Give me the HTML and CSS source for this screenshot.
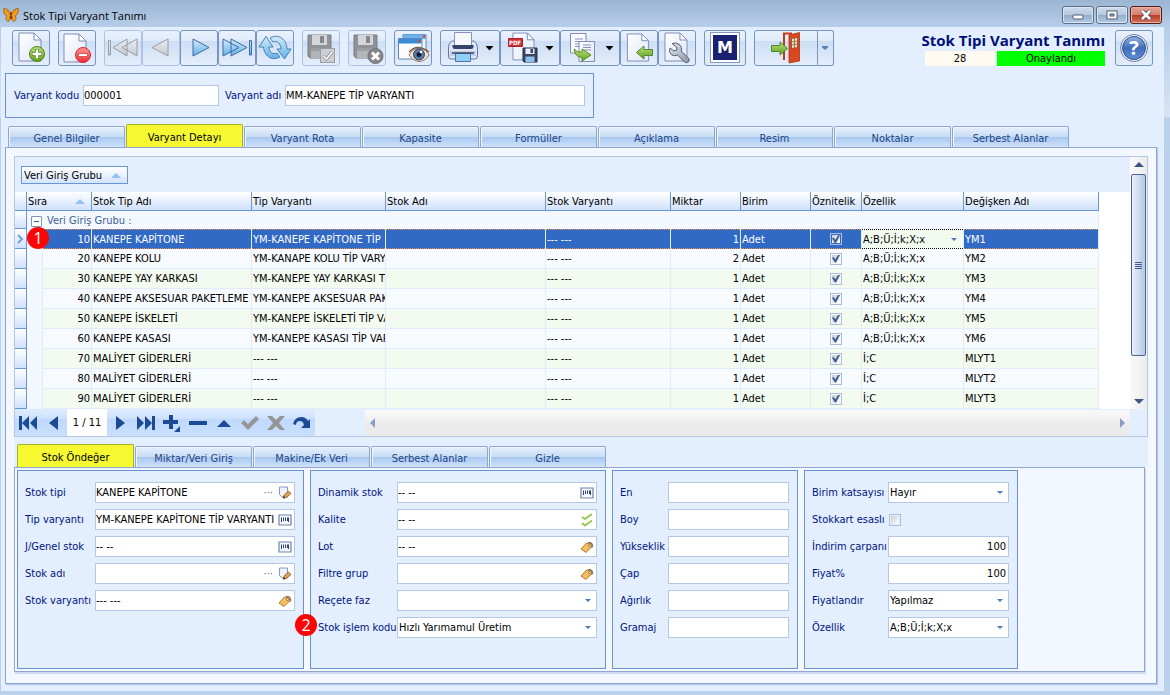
FILE: index.html
```html
<!DOCTYPE html>
<html lang="tr">
<head>
  <meta charset="utf-8">
  <title>Stok Tipi Varyant Tanımı</title>
  <link rel="stylesheet" href="styles.css">
</head>
<body>
  <!-- shared gradients and symbols -->
  <svg class="defs" width="0" height="0" aria-hidden="true">
    <defs>
      <linearGradient id="gPage" x1="0" y1="0" x2="1" y2="1"><stop offset="0" stop-color="#fff"/><stop offset="1" stop-color="#dfe6f6"/></linearGradient>
      <linearGradient id="gBlue" x1="0" y1="0" x2="0" y2="1"><stop offset="0" stop-color="#d4ecfa"/><stop offset="1" stop-color="#5fb0e8"/></linearGradient>
      <linearGradient id="gGray" x1="0" y1="0" x2="0" y2="1"><stop offset="0" stop-color="#eceef2"/><stop offset="1" stop-color="#c3c7ce"/></linearGradient>
      <linearGradient id="gGreen" x1="0" y1="0" x2="0" y2="1"><stop offset="0" stop-color="#b9e07c"/><stop offset="1" stop-color="#5fa01c"/></linearGradient>
      <linearGradient id="gRed" x1="0" y1="0" x2="0" y2="1"><stop offset="0" stop-color="#ff9a9a"/><stop offset="1" stop-color="#ee2c35"/></linearGradient>
      <linearGradient id="gHelp" x1="0" y1="0" x2="0" y2="1"><stop offset="0" stop-color="#8fb4e6"/><stop offset=".5" stop-color="#3f6cb8"/><stop offset="1" stop-color="#5f8fd4"/></linearGradient>
      <linearGradient id="gSteel" x1="0" y1="0" x2="1" y2="1"><stop offset="0" stop-color="#e3e7ee"/><stop offset="1" stop-color="#8c96a8"/></linearGradient>
      <symbol id="page" viewBox="0 0 24 30"><path d="M1 1H16L23 8V29H1Z" fill="url(#gPage)" stroke="#7f8db8"/><path d="M16 1V8H23Z" fill="#fff" stroke="#7f8db8"/></symbol>
      <symbol id="floppyGray" viewBox="0 0 25 25"><path d="M1 1H24V24H3L1 22Z" fill="#8f9297" stroke="#7b7e84"/><path d="M5 1H20V11H5Z" fill="#d4d6da"/><path d="M13 2H17V9H13Z" fill="#85888d"/><path d="M4 14H21V24H4Z" fill="#b2b5ba"/><path d="M4 14H21V17H4Z" fill="#9b9ea3"/></symbol>
      <symbol id="lookup" viewBox="0 0 14 12"><path d="M1 1H13V11H1Z" fill="#f4f7fd" stroke="#6f83ad" stroke-width="1.200"/><path d="M3.500 3.500V8M5.500 3.500V7M7.500 3.500V7M9.500 3.500V7M10.500 3.500V8" stroke="#2e4570"/></symbol>
      <symbol id="edit" viewBox="0 0 14 14"><path d="M1.500 1H9.500V11H4L1.500 8.500Z" fill="#eef3fc" stroke="#8598c8"/><path d="M5 12L6 9L10.500 5L13 7.500L8.500 11.500Z" fill="#dba15a" stroke="#8c5a28" stroke-width=".8"/><path d="M5 12.500L6 10L7.500 11.800Z" fill="#333"/></symbol>
      <symbol id="tag" viewBox="0 0 14 14"><path d="M1 9L6.500 3L12 3.500L11.500 7L6 12.500Z" fill="#f7bd5d" stroke="#a8702a" stroke-width=".9"/><circle cx="9.500" cy="5.500" r="1" fill="#fff" stroke="#704a1c" stroke-width=".7"/><path d="M8 3Q11 1 12 4Q14 7 11.500 8" fill="none" stroke="#555" stroke-width=".9"/></symbol>
      <symbol id="ticks" viewBox="0 0 14 16"><path d="M2 5L5 7L12 2M2 11L5 13.500L12 8.500" fill="none" stroke="#9ac94f" stroke-width="2"/></symbol>
    </defs>
  </svg>

  <div class="window">
    <header class="titlebar">
      <svg width="16" height="16" viewBox="0 0 16 16"><path d="M8 7C6.500 3 3.500 1.500 .7 1.500C.5 4 1 8 4 9C2 10 3 13.500 5 14.500C7 14 8 11 8 9C8 11 9 14 11 14.500C13 13.500 14 10 12 9C15 8 15.500 4 15.300 1.500C12.500 1.500 9.500 3 8 7Z" fill="#f79f1f" stroke="#8a4d10" stroke-width=".7"/><path d="M8 5.500V12" stroke="#3f2006" stroke-width="1.300"/><path d="M3.500 3.500L7.500 8.500L5.500 12M12.500 3.500L8.500 8.500L10.500 12" fill="none" stroke="#b5610f" stroke-width=".6"/></svg>
      <span class="titlebar-text">Stok Tipi Varyant Tanımı</span>
      <div class="winbtns">
        <button class="winbtn" aria-label="Küçült"><svg width="12" height="12"><rect x="1" y="6" width="10" height="4" rx="1" fill="#fff" stroke="#4d5c70"/></svg></button>
        <button class="winbtn" aria-label="Büyüt"><svg width="12" height="12"><rect x="1" y="2" width="10" height="8" fill="#fff" stroke="#4d5c70"/><rect x="4" y="5" width="4" height="2" fill="#8ea5c0" stroke="#4d5c70"/></svg></button>
        <button class="winbtn close" aria-label="Kapat"><svg width="12" height="12"><path d="M2 2L10 10M10 2L2 10" stroke="#54525e" stroke-width="4.500"/><path d="M2 2L10 10M10 2L2 10" stroke="#fff" stroke-width="2.500"/></svg></button>
      </div>
    </header>

    <main class="client">
      <div class="toolbar">
        <div class="tgroup">
          <button class="tbtn" title="Yeni"><svg width="36" height="34"><use href="#page" x="5" y="1" width="24" height="30"/><circle cx="24" cy="23" r="7.500" fill="url(#gGreen)" stroke="#4c8217"/><path d="M24 18V28M19 23H29" stroke="#4c8217" stroke-width="4"/><path d="M24 18.500V27.500M19.500 23H28.500" stroke="#fff" stroke-width="2.500"/></svg></button>
        </div>
        <div class="tgroup">
          <button class="tbtn" title="Sil"><svg width="36" height="34"><use href="#page" x="4" y="2" width="24" height="30"/><circle cx="24" cy="24" r="7.500" fill="url(#gRed)" stroke="#d8222c"/><rect x="19.500" y="22.500" width="9" height="3" fill="#fff" stroke="#c0202a" stroke-width=".6"/></svg></button>
        </div>
        <div class="tgroup">
          <button class="tbtn" disabled title="İlk"><svg width="36" height="34" fill="url(#gGray)" stroke="#989da7"><path d="M3.500 9.500H5.500V24H3.500ZM8 16.500L22 8V25ZM17 16.500L32 8V25Z"/></svg></button>
          <button class="tbtn" disabled title="Önceki"><svg width="36" height="34" fill="url(#gGray)" stroke="#989da7"><path d="M9 16.500L25 8V25Z"/></svg></button>
          <button class="tbtn" title="Sonraki"><svg width="36" height="34" fill="url(#gBlue)" stroke="#3d6ba3"><path d="M28 16.500L12 8V25Z"/></svg></button>
          <button class="tbtn" title="Son"><svg width="36" height="34" fill="url(#gBlue)" stroke="#3d6ba3"><path d="M20 16.500L4 8V25ZM28 16.500L12 8V25ZM30.500 9.500H32.500V24H30.500Z"/></svg></button>
          <button class="tbtn" title="Yenile"><svg width="36" height="34"><path d="M13 7C22 2 30 9 30 18H34L27.500 28L20 18H24C24 13 20 9 16 11Z" fill="url(#gBlue)" stroke="#4a80b4"/><path d="M23 26C14 31 7 24 6.500 16H2L9 5.500L16 16H12C12 21 16 24 20 22Z" fill="url(#gBlue)" stroke="#4a80b4"/></svg></button>
        </div>
        <div class="tgroup">
          <button class="tbtn" disabled title="Kaydet"><svg width="36" height="34"><use href="#floppyGray" x="4" y="3" width="25" height="25"/><rect x="17.500" y="17.500" width="14" height="14" fill="#ccced2" stroke="#9a9da2"/><path d="M20.500 25L23.500 28L29 21" fill="none" stroke="#83868c" stroke-width="3"/><path d="M20.500 25L23.500 28L29 21" fill="none" stroke="#fff" stroke-width="1.500"/></svg></button>
        </div>
        <div class="tgroup">
          <button class="tbtn" disabled title="Vazgeç"><svg width="36" height="34"><use href="#floppyGray" x="4" y="3" width="25" height="25"/><circle cx="26.500" cy="25" r="7.500" fill="#85878b" stroke="#6f7176"/><path d="M23 21.500L30 28.500M30 21.500L23 28.500" stroke="#fff" stroke-width="3"/></svg></button>
        </div>
        <div class="tgroup">
          <button class="tbtn" title="Görünüm"><svg width="36" height="34"><path d="M8 3.500H31V20H8Z" fill="#f2f6fd" stroke="#5d86bd"/><path d="M8 3.500H31V8H8Z" fill="#6db2e8"/><path d="M3.500 7.500H27V28H3.500Z" fill="#fafcff" stroke="#5d86bd"/><path d="M4 8H26.500V12.500H4Z" fill="#3b8ad4"/><circle cx="29" cy="5.500" r="1.200" fill="#e03a2a"/><circle cx="24.500" cy="10" r="1.200" fill="#e03a2a"/><path d="M14 24Q18 17 25 17Q31 18 34 24Q30 31 23 30.500Q18 30 14 24Z" fill="#f3e3d4" stroke="#9c7a63"/><path d="M14 21Q22 12 34 21" fill="none" stroke="#7b5a4c" stroke-width="1.300"/><circle cx="24" cy="23.500" r="5.500" fill="#587ba8" stroke="#2f4668"/><circle cx="24" cy="23.500" r="2.500" fill="#131c2c"/><circle cx="26" cy="21" r="1.300" fill="#fff"/></svg></button>
        </div>
        <div class="tgroup">
          <button class="tbtn wide" title="Yazdır"><svg width="58" height="34"><path d="M9 12Q7.500 13 7.500 17V25Q7.500 28 10 28H34Q36.500 28 36.500 25V17Q36.500 12 33 10H11Z" fill="#dfe5f3" stroke="#6577a5"/><path d="M13.500 1.500H30.500V15H13.500Z" fill="#f5f8ff" stroke="#8494c0"/><path d="M11.500 14H32.500V16Q32.500 18 30 18H14Q11.500 18 11.500 16Z" fill="#34436b"/><path d="M9 20H35V25H9Z" fill="#c4cde2"/><path d="M14.500 22.500H29.500V30.500H14.500Z" fill="#8fd0f7" stroke="#4d75ad"/><path d="M11 22H33" stroke="#34436b" stroke-width="1.500"/><path d="M44.500 15H52.500L48.500 19.500Z"/></svg></button>
          <button class="tbtn wide" title="PDF"><svg width="58" height="34"><use href="#page" x="11" y="1" width="23" height="29"/><path d="M7.500 7.500H21.500V15.500H7.500Z" fill="#cf3038" stroke="#a81f27"/><text class="pdf" x="14" y="14" text-anchor="middle">PDF</text><path d="M22 17H36V31H23L22 30Z" fill="#3a4566" stroke="#252e48"/><path d="M24.500 17.500H33.500V23H24.500Z" fill="#e8edf6"/><path d="M29.500 18H32V22H29.500Z" fill="#3a4566"/><path d="M24.500 25.500H33.500V31H24.500Z" fill="#8fc0ea"/><path d="M44.500 15H52.500L48.500 19.500Z"/></svg></button>
          <button class="tbtn wide" title="Kopyala"><svg width="58" height="34"><path d="M9.500 2.500H25V22H9.500Z" fill="#f8faff" stroke="#7f8db8"/><path d="M14 8H22M14 10.500H22M14 13H22M14 15.500H20" stroke="#8593b5"/><path d="M18 10.500H33.500V30.500H18Z" fill="url(#gPage)" stroke="#7f8db8"/><path d="M22 14H30M22 16.500H30M22 19H30" stroke="#8593b5"/><path d="M13 18Q16 22 21 21V18L30 24L21 30V26.500Q14 26 13 18Z" fill="url(#gGreen)" stroke="#568d1c"/><path d="M44.500 15H52.500L48.500 19.500Z"/></svg></button>
          <button class="tbtn" title="Al"><svg width="36" height="34"><use href="#page" x="5" y="2" width="24" height="29"/><path d="M15.500 21.500L23 15V18.500H31.500V24.500H23V28Z" fill="url(#gGreen)" stroke="#4c8a2c"/></svg></button>
          <button class="tbtn" title="Ayarlar"><svg width="36" height="34"><use href="#page" x="5" y="1" width="24" height="30"/><path d="M13 12.500L17.500 16L18 19L15 20L11 17Q9.500 22 13 24Q16 25.500 18.500 24L25.500 31Q27.500 32.500 29.500 31Q31 29 29.500 27L22.500 20.500Q23.500 16 20.500 13.500Q17 11 13 12.500Z" fill="url(#gSteel)" stroke="#566174"/></svg></button>
        </div>
        <div class="tgroup">
          <button class="tbtn mid" title="M"><svg width="40" height="34"><rect x="5.500" y="1.500" width="29" height="30" fill="#fff" stroke="#8a97bd"/><rect x="8" y="4" width="24" height="25" fill="#1a2170"/><text class="logo" x="20" y="22" text-anchor="middle">M</text></svg></button>
        </div>
        <div class="tgroup">
          <button class="tbtn exit" title="Çıkış"><svg width="62" height="34"><path d="M29 29V2.500H37" fill="none" stroke="#c23a18" stroke-width="2"/><path d="M34 4L44.500 1.500V30L34 32Z" fill="#d9481f" stroke="#ad3411" stroke-width=".8"/><path d="M36.500 7.500L42.500 6.500V16.500L36.500 17.500Z" fill="#f1e3c8" stroke="#8d3a1d" stroke-width=".7"/><path d="M39.500 7V17M36.500 11L42.500 10M36.500 14L42.500 13" stroke="#8d6a4d" stroke-width=".9"/><path d="M32.500 17.500L25 11V14.500H16.500V20.500H25V24Z" fill="url(#gGreen)" stroke="#4c8a2c"/></svg></button>
          <button class="tbtn drop" title="Çıkış seçenekleri"><svg width="14" height="34"><path d="M4 15H10V16.500L7 19L4 16.500Z" fill="#5a82b8"/></svg></button>
        </div>
        <div class="doc">
          <h1>Stok Tipi Varyant Tanımı</h1>
          <div class="doc-state"><span class="doc-no">28</span><span class="doc-ok">Onaylandı</span></div>
        </div>
        <button class="tbtn" title="Yardım"><svg width="36" height="34"><circle cx="18" cy="17" r="13.500" fill="#f3f6fc" stroke="#6c7fa8"/><circle cx="18" cy="17" r="11.500" fill="url(#gHelp)" stroke="#2e5194"/><text class="qmark" x="18" y="24" text-anchor="middle">?</text></svg></button>
      </div>

      <section class="keybox">
        <label for="vkod">Varyant kodu</label><input class="box code" id="vkod" value="000001">
        <label for="vadi">Varyant adı</label><input class="box name" id="vadi" value="MM-KANEPE TİP VARYANTI">
      </section>

      <nav class="tabs">
        <button class="tab">Genel Bilgiler</button>
        <button class="tab active">Varyant Detayı</button>
        <button class="tab">Varyant Rota</button>
        <button class="tab">Kapasite</button>
        <button class="tab">Formüller</button>
        <button class="tab">Açıklama</button>
        <button class="tab">Resim</button>
        <button class="tab">Noktalar</button>
        <button class="tab">Serbest Alanlar</button>
      </nav>

      <section class="sheet">
        <div class="grid">
          <div class="grid-body">
            <div class="grid-view">
              <div class="groupbar"><button class="chip">Veri Giriş Grubu <i class="sort"></i></button></div>
              <div class="table-wrap">
                <table>
                  <colgroup><col class="c-ind"><col class="c-pad"><col class="c-sira"><col class="c-160"><col class="c-134"><col class="c-160"><col class="c-125"><col class="c-70"><col class="c-70"><col class="c-51"><col class="c-102"><col class="c-135"></colgroup>
                  <thead>
                    <tr><th></th><th colspan="2"><span class="sira">Sıra <i class="sort"></i></span></th><th>Stok Tip Adı</th><th>Tip Varyantı</th><th>Stok Adı</th><th>Stok Varyantı</th><th>Miktar</th><th>Birim</th><th>Öznitelik</th><th>Özellik</th><th>Değişken Adı</th></tr>
                  </thead>
                  <tbody>
                    <tr class="grp"><td class="ind"></td><td colspan="11"><button class="fold" aria-label="Daralt"></button>Veri Giriş Grubu :</td></tr>
                    <tr class="sel"><td class="ind"><svg width="8" height="10"><path d="M2 1L6 5L2 9" fill="none" stroke="#6f9fdc" stroke-width="2"/></svg></td><td class="pad"><span class="mark mark-row">1</span></td><td class="num">10</td><td>KANEPE KAPİTONE</td><td>YM-KANEPE KAPİTONE TİP</td><td></td><td>--- ---</td><td class="num">1</td><td>Adet</td><td class="chk"><input type="checkbox" checked aria-label="Öznitelik"></td><td class="cell-edit"><div class="pick"><select aria-label="Özellik"><option>A;B;Ü;İ;k;X;x</option></select></div></td><td>YM1</td></tr>
                    <tr><td class="ind"></td><td class="pad"></td><td class="num">20</td><td>KANEPE KOLU</td><td>YM-KANAPE KOLU TİP VARYANTI</td><td></td><td>--- ---</td><td class="num">2</td><td>Adet</td><td class="chk"><input type="checkbox" checked aria-label="Öznitelik"></td><td>A;B;Ü;İ;k;X;x</td><td>YM2</td></tr>
                    <tr><td class="ind"></td><td class="pad"></td><td class="num">30</td><td>KANEPE YAY KARKASI</td><td>YM-KANEPE YAY KARKASI TİP VARYANTI</td><td></td><td>--- ---</td><td class="num">1</td><td>Adet</td><td class="chk"><input type="checkbox" checked aria-label="Öznitelik"></td><td>A;B;Ü;İ;k;X;x</td><td>YM3</td></tr>
                    <tr><td class="ind"></td><td class="pad"></td><td class="num">40</td><td>KANEPE AKSESUAR PAKETLEME</td><td>YM-KANEPE AKSESUAR PAKETLEME</td><td></td><td>--- ---</td><td class="num">1</td><td>Adet</td><td class="chk"><input type="checkbox" checked aria-label="Öznitelik"></td><td>A;B;Ü;İ;k;X;x</td><td>YM4</td></tr>
                    <tr><td class="ind"></td><td class="pad"></td><td class="num">50</td><td>KANEPE İSKELETİ</td><td>YM-KANEPE İSKELETİ TİP VARYANTI</td><td></td><td>--- ---</td><td class="num">1</td><td>Adet</td><td class="chk"><input type="checkbox" checked aria-label="Öznitelik"></td><td>A;B;Ü;İ;k;X;x</td><td>YM5</td></tr>
                    <tr><td class="ind"></td><td class="pad"></td><td class="num">60</td><td>KANEPE KASASI</td><td>YM-KANEPE KASASI TİP VARYANTI</td><td></td><td>--- ---</td><td class="num">1</td><td>Adet</td><td class="chk"><input type="checkbox" checked aria-label="Öznitelik"></td><td>A;B;Ü;İ;k;X;x</td><td>YM6</td></tr>
                    <tr><td class="ind"></td><td class="pad"></td><td class="num">70</td><td>MALİYET GİDERLERİ</td><td>--- ---</td><td></td><td>--- ---</td><td class="num">1</td><td>Adet</td><td class="chk"><input type="checkbox" checked aria-label="Öznitelik"></td><td>İ;C</td><td>MLYT1</td></tr>
                    <tr><td class="ind"></td><td class="pad"></td><td class="num">80</td><td>MALİYET GİDERLERİ</td><td>--- ---</td><td></td><td>--- ---</td><td class="num">1</td><td>Adet</td><td class="chk"><input type="checkbox" checked aria-label="Öznitelik"></td><td>İ;C</td><td>MLYT2</td></tr>
                    <tr><td class="ind"></td><td class="pad"></td><td class="num">90</td><td>MALİYET GİDERLERİ</td><td>--- ---</td><td></td><td>--- ---</td><td class="num">1</td><td>Adet</td><td class="chk"><input type="checkbox" checked aria-label="Öznitelik"></td><td>İ;C</td><td>MLYT3</td></tr>
                  </tbody>
                </table>
              </div>
            </div>
            <div class="vscroll">
              <i class="arr-up"></i>
              <div class="thumb"><i></i><i></i><i></i><i></i></div>
              <i class="arr-down"></i>
            </div>
          </div>
          <div class="grid-foot">
            <div class="navigator">
              <button aria-label="İlk"><svg width="20" height="16"><path d="M1 1H4V15H1ZM11 1V15L4 8ZM19 1V15L12 8Z"/></svg></button>
              <button aria-label="Önceki"><svg width="20" height="16"><path d="M14 1V15L5 8Z"/></svg></button>
              <span class="pos">1 / 11</span>
              <button aria-label="Sonraki"><svg width="20" height="16"><path d="M6 1V15L15 8Z"/></svg></button>
              <button aria-label="Son"><svg width="20" height="16"><path d="M1 1V15L8 8ZM9 1V15L16 8ZM16 1H19V15H16Z"/></svg></button>
              <button aria-label="Ekle"><svg width="20" height="18"><path d="M7 1H11V6H16V10H11V15H7V10H1V6H7ZM18 12V18H12Z"/></svg></button>
              <button aria-label="Çıkar"><svg width="20" height="16"><path d="M1 6H19V10H1Z"/></svg></button>
              <button aria-label="Yukarı"><svg width="20" height="16"><path d="M3 12L10 5L17 12Z"/></svg></button>
              <button aria-label="Onayla" disabled><svg width="20" height="16"><path d="M1 8L4 5L8 9L16 1L19 4L8 15Z"/></svg></button>
              <button aria-label="İptal" disabled><svg width="20" height="16"><path d="M1 1H6L10 5L14 1H19L13 8L19 15H14L10 11L6 15H1L7 8Z"/></svg></button>
              <button aria-label="Yinele"><svg width="20" height="16"><path d="M1 9Q3 2 9 2Q14 2 16 6L18 4V13H9L12 10Q11 6 8 6Q4 6 4 10Z"/></svg></button>
            </div>
            <div class="hscroll"><i class="arr-left"></i><i class="arr-right"></i></div>
            <div class="corner"></div>
          </div>
        </div>

        <div class="detail">
          <nav class="tabs sub">
            <button class="tab active">Stok Öndeğer</button>
            <button class="tab">Miktar/Veri Giriş</button>
            <button class="tab">Makine/Ek Veri</button>
            <button class="tab">Serbest Alanlar</button>
            <button class="tab">Gizle</button>
          </nav>
          <div class="panels">
            <section class="panel p1">
              <label for="f11">Stok tipi</label><div class="box"><input id="f11" value="KANEPE KAPİTONE"><button class="dots" aria-label="Seç">···</button><button aria-label="Düzenle"><svg width="14" height="14"><use href="#edit"/></svg></button></div>
              <label for="f12">Tip varyantı</label><div class="box"><input id="f12" value="YM-KANEPE KAPİTONE TİP VARYANTI"><button aria-label="Bul"><svg width="14" height="12"><use href="#lookup"/></svg></button></div>
              <label for="f13">J/Genel stok</label><div class="box"><input id="f13" value="-- --"><button aria-label="Bul"><svg width="14" height="12"><use href="#lookup"/></svg></button></div>
              <label for="f14">Stok adı</label><div class="box"><input id="f14"><button class="dots" aria-label="Seç">···</button><button aria-label="Düzenle"><svg width="14" height="14"><use href="#edit"/></svg></button></div>
              <label for="f15">Stok varyantı</label><div class="box"><input id="f15" value="--- ---"><button aria-label="Etiket"><svg width="14" height="14"><use href="#tag"/></svg></button></div>
            </section>
            <section class="panel p2">
              <label for="f21">Dinamik stok</label><div class="box"><input id="f21" value="-- --"><button aria-label="Bul"><svg width="14" height="12"><use href="#lookup"/></svg></button></div>
              <label for="f22">Kalite</label><div class="box"><input id="f22" value="-- --"><button aria-label="Kalite seç"><svg width="14" height="16"><use href="#ticks"/></svg></button></div>
              <label for="f23">Lot</label><div class="box"><input id="f23" value="-- --"><button aria-label="Etiket"><svg width="14" height="14"><use href="#tag"/></svg></button></div>
              <label for="f24">Filtre grup</label><div class="box"><input id="f24"><button aria-label="Etiket"><svg width="14" height="14"><use href="#tag"/></svg></button></div>
              <label for="f25">Reçete faz</label><div class="box pick"><select id="f25"><option></option></select></div>
              <label for="f26">Stok işlem kodu<span class="mark mark-field" aria-hidden="true">2</span></label><div class="box pick"><select id="f26"><option>Hızlı Yarımamul Üretim</option></select></div>
            </section>
            <section class="panel p3">
              <label for="f31">En</label><input class="box" id="f31">
              <label for="f32">Boy</label><input class="box" id="f32">
              <label for="f33">Yükseklik</label><input class="box" id="f33">
              <label for="f34">Çap</label><input class="box" id="f34">
              <label for="f35">Ağırlık</label><input class="box" id="f35">
              <label for="f36">Gramaj</label><input class="box" id="f36">
            </section>
            <section class="panel p4">
              <label for="f41">Birim katsayısı</label><div class="box pick"><select id="f41"><option>Hayır</option></select></div>
              <label for="f42">Stokkart esaslı</label><div class="solo"><input type="checkbox" id="f42"></div>
              <label for="f43">İndirim çarpanı</label><input class="box amount" id="f43" value="100">
              <label for="f44">Fiyat%</label><input class="box amount" id="f44" value="100">
              <label for="f45">Fiyatlandır</label><div class="box pick"><select id="f45"><option>Yapılmaz</option></select></div>
              <label for="f46">Özellik</label><div class="box pick"><select id="f46"><option>A;B;Ü;İ;k;X;x</option></select></div>
            </section>
          </div>
        </div>
      </section>
    </main>
  </div>
</body>
</html>
```
FILE: styles.css
```css
* {
  box-sizing: border-box;
}

body {
  margin: 0;
  font-family: "DejaVu Sans Condensed", "DejaVu Sans", sans-serif;
  font-size: 11px;
  color: #000;
  background: #b9d1ea;
}

button, input, select {
  font: inherit;
  color: inherit;
  margin: 0;
  padding: 0;
  border: 0;
  border-radius: 0;
  background: none;
}

svg {
  display: block;
}

.defs {
  position: absolute;
}

.window {
  display: flex;
  flex-direction: column;
  min-height: 100vh;
  padding: 0 6px 4px 1px;
  background: linear-gradient(#9bb5d2 0, #b5cde8 26px, #d7e4f4 117px, #b9d1ea 118px);
}

/* title bar */
.titlebar {
  display: flex;
  align-items: center;
  height: 27px;
  padding: 3px 2px 0 2px;
}

.titlebar-text {
  flex: 1;
  margin-left: 4px;
  font: 11px "Open Sans", sans-serif;
}

.winbtns {
  display: flex;
  gap: 2px;
}

.winbtn {
  display: flex;
  align-items: center;
  justify-content: center;
  width: 32px;
  height: 18px;
  border: 1px solid #5d6f88;
  border-radius: 3px;
  background: linear-gradient(#cfdded, #b4c8de 50%, #93adc9 50%, #b3cae2);
  box-shadow: inset 0 0 0 1px #dbe7f3;
}

.winbtn.close {
  border-color: #5b1a16;
  background: linear-gradient(#e7a597, #d47f70 50%, #b83a26 50%, #d07360);
  box-shadow: inset 0 0 0 1px #e9b4a8;
}

.client {
  flex: 1;
  display: flex;
  flex-direction: column;
  padding: 3px 7px 7px 4px;
  background: #e3eeff;
}

/* toolbar */
.toolbar {
  display: flex;
  gap: 8px;
  padding: 0 4px 0 7px;
}

.tgroup {
  display: flex;
}

.tbtn {
  width: 38px;
  height: 36px;
  border: 1px solid #7695c2;
  border-radius: 3px;
  background: linear-gradient(#eaf2fe, #dfeafa 28%, #cddef3 30%, #e4eefc);
}

.tbtn:disabled {
  border-color: #aec3e0;
}

.tbtn.wide {
  width: 60px;
}

.tbtn.mid {
  width: 42px;
}

.tbtn.exit {
  width: 64px;
  border-radius: 3px 0 0 3px;
}

.tbtn.drop {
  width: 16px;
  border-left: 0;
  border-radius: 0 3px 3px 0;
}

.pdf {
  font: bold 6px "DejaVu Sans Condensed", sans-serif;
  fill: #fff;
}

.logo {
  font: 900 16px "DejaVu Sans", sans-serif;
  fill: #fff;
}

.qmark {
  font: bold 20px "Open Sans", sans-serif;
  fill: #fff;
}

.doc {
  margin-left: auto;
  display: flex;
  flex-direction: column;
  align-items: flex-end;
  justify-content: space-between;
  margin-right: 2px;
}

.doc h1 {
  margin: 0;
  font: bold 15px/21px "Open Sans", sans-serif;
  color: #000f75;
}

.doc-state {
  display: flex;
  gap: 2px;
  line-height: 15px;
  text-align: center;
}

.doc-no {
  width: 70px;
  background: #fffbf0;
}

.doc-ok {
  width: 108px;
  background: #0f0;
}

/* inputs */
label {
  color: #00147d;
  white-space: nowrap;
}

.box {
  height: 21px;
  min-width: 0;
  border: 1px solid #b4c8e4;
  background: #fff;
}

.box.amount {
  padding-right: 2px;
  text-align: right;
}

div.box {
  display: flex;
  align-items: center;
}

.box input {
  flex: 1;
  min-width: 0;
}

.box button {
  display: flex;
  margin: 0 2px 0 1px;
}

.box .dots {
  margin-right: 4px;
  color: #4d6f9c;
}

.pick,
div.box.pick {
  display: grid;
  align-items: center;
}

.pick select {
  grid-area: 1 / 1;
  appearance: none;
  width: 100%;
  padding: 0 1px;
}

.pick::after {
  content: "";
  grid-area: 1 / 1;
  justify-self: end;
  margin-right: 5px;
  border: 3px solid transparent;
  border-top-color: #4f79b4;
  border-bottom: 0;
  pointer-events: none;
}

input[type="checkbox"] {
  appearance: none;
  display: block;
  width: 12px;
  height: 12px;
  border: 1px solid #a9bfdd;
  background: linear-gradient(135deg, #c9cdd4, #fff) content-box #fff;
  padding: 1px;
}

input[type="checkbox"]:checked::before {
  content: "";
  display: block;
  height: 8px;
  background: #3f5f94;
  clip-path: polygon(0 40%, 20% 30%, 40% 60%, 80% 0, 100% 5%, 50% 100%, 35% 100%);
}

.keybox {
  display: flex;
  align-items: center;
  align-self: flex-start;
  height: 45px;
  margin-top: 7px;
  padding: 0 8px;
  border: 1px solid #6992cf;
}

.keybox label {
  width: 69px;
}

.keybox .code {
  width: 136px;
  margin-right: 6px;
}

.keybox .code + label {
  width: 60px;
}

.keybox .name {
  width: 300px;
}

/* tabs */
.tabs {
  display: flex;
  align-items: flex-end;
  gap: 1px;
  height: 23px;
  margin-top: 6px;
  padding-left: 3px;
}

.tab {
  width: 117px;
  height: 21px;
  padding-top: 2px;
  border: 1px solid #8fa6cf;
  border-bottom: 0;
  border-radius: 2px 2px 0 0;
  color: #1c4587;
  background: linear-gradient(#e6effc, #c9dcf4 50%, #a9c8f0 52%, #cfe2fc);
  box-shadow: inset 1px 1px 0 #f0f6ff;
}

.tab.active {
  height: 23px;
  border-color: #a3b02e;
  color: #000;
  background: #f6f930;
  box-shadow: none;
}

.sheet {
  flex: 1;
  padding: 8px;
  border: 1px solid #8fa6cf;
  background: #f3f7ff;
  box-shadow: 1px 1px 1px #b8c8e2;
}

/* grid */
.grid {
  border: 1px solid #b4c8e4;
  background: #e3eeff;
}

.grid-body {
  display: flex;
}

.grid-view {
  flex: 1;
  min-width: 0;
}

.groupbar {
  padding: 9px 6px 8px;
}

.chip {
  display: flex;
  align-items: center;
  justify-content: space-between;
  width: 107px;
  height: 18px;
  padding: 0 6px 0 2px;
  border: 1px solid #6a98d4;
  background: linear-gradient(#fff, #d3e4fc);
}

.sort {
  border: 5px solid transparent;
  border-bottom-color: #92c0f5;
  border-top: 0;
}

.table-wrap {
  overflow: hidden;
  background: #fff;
}

table {
  table-layout: fixed;
  width: 1084px;
  border-collapse: separate;
  border-spacing: 0;
}

.c-ind { width: 12px; }
.c-pad { width: 16px; }
.c-sira { width: 49px; }
.c-160 { width: 160px; }
.c-134 { width: 134px; }
.c-125 { width: 125px; }
.c-70 { width: 70px; }
.c-51 { width: 51px; }
.c-102 { width: 102px; }
.c-135 { width: 135px; }

th {
  height: 19px;
  padding: 0 1px;
  border-right: 1px solid #6a98d4;
  border-bottom: 1px solid #6a98d4;
  font-weight: normal;
  text-align: left;
  white-space: nowrap;
  background: linear-gradient(#fff, #cfe1fc);
}

.sira {
  display: flex;
  align-items: center;
  justify-content: space-between;
  padding-right: 5px;
}

td {
  height: 20px;
  padding: 0 1px;
  overflow: hidden;
  white-space: nowrap;
  text-overflow: clip;
  border-right: 1px solid #e0ebfc;
  border-bottom: 1px solid #e0ebfc;
  background: #f7fbff;
}

tr:nth-child(even) td {
  background: #f3fbf1;
}

td.num {
  text-align: right;
}

tr td.ind {
  border-right: 1px solid #6a98d4;
  border-bottom: 1px solid #6a98d4;
  background: linear-gradient(#fff, #cfe1fc);
}

tr td.pad {
  overflow: visible;
  border-bottom-color: #f3f7ff;
  background: #f3f7ff;
}

tr.grp td {
  height: 18px;
  color: #3c6298;
}

tr.grp td + td {
  border-bottom: 0;
  background: #f3f7ff;
}

.fold {
  width: 11px;
  height: 11px;
  margin: 0 5px 0 3px;
  border: 1px solid #7c93ba;
  border-radius: 1px;
  background: linear-gradient(#3f5680, #3f5680) center / 5px 1px no-repeat #fff;
  vertical-align: -2px;
}

/* focused row: dotted lines along its top and bottom */
tr.sel td:not(.ind, .pad) {
  border-bottom: 0;
  color: #fff;
  background:
    repeating-linear-gradient(90deg, #e8963c 0 1px, #316ac5 1px 2px) 0 0 / 100% 1px no-repeat,
    repeating-linear-gradient(90deg, #e8963c 0 1px, #316ac5 1px 2px) 0 100% / 100% 1px no-repeat,
    #316ac5;
}

tr.sel td.cell-edit:not(.ind) {
  color: #000;
  background:
    repeating-linear-gradient(90deg, #000 0 1px, #fff 1px 2px) 0 0 / 100% 1px no-repeat,
    repeating-linear-gradient(90deg, #000 0 1px, #fff 1px 2px) 0 100% / 100% 1px no-repeat,
    #f3fbf1;
}

.cell-edit select {
  padding: 0;
}

.chk input {
  margin: 0 auto;
}

/* numbered callouts */
.mark {
  position: absolute;
  width: 22px;
  height: 22px;
  border-radius: 50%;
  color: #fff;
  background: #f90606;
  font: 16px/22px "Open Sans", sans-serif;
  text-align: center;
}

td.pad,
.p2 label {
  position: relative;
}

.mark-row {
  top: -2px;
  left: 0;
  z-index: 1;
}

.mark-field {
  top: -7px;
  left: -23px;
}

/* scrollbars */
.vscroll {
  display: flex;
  flex-direction: column;
  align-items: center;
  width: 17px;
  padding: 5px 0;
  background: linear-gradient(90deg, #fafafa, #ebebeb);
}

.arr-up, .arr-down, .arr-left, .arr-right {
  border: 5px solid transparent;
}

.arr-up {
  border-top: 0;
  border-bottom-color: #3f5680;
}

.arr-down {
  margin-top: auto;
  border-bottom: 0;
  border-top-color: #3f5680;
}

.thumb {
  display: flex;
  flex-direction: column;
  align-items: center;
  justify-content: center;
  gap: 1px;
  width: 15px;
  height: 182px;
  margin-top: 7px;
  border: 1px solid #4f658f;
  border-radius: 2px;
  background: linear-gradient(90deg, #e8f0fc, #b3c8e4);
}

.thumb i {
  width: 7px;
  height: 1px;
  background: #445b88;
}

.grid-foot {
  display: flex;
  height: 27px;
}

.navigator {
  display: flex;
  align-items: center;
  gap: 6px;
  width: 300px;
  padding: 0 3px;
  background: linear-gradient(#dfebfd, #cfe2fd 35%, #bfd8fc 36%, #c9dffd);
}

.navigator svg {
  fill: #1d4a94;
}

.navigator :disabled svg {
  fill: #959595;
}

.pos {
  flex: 1;
  align-self: stretch;
  margin: 0 -3px;
  line-height: 27px;
  text-align: center;
  background: #fff;
}

.hscroll {
  flex: 1;
  display: flex;
  align-items: center;
  justify-content: space-between;
  margin: 1px 0 0 50px;
  background: linear-gradient(#fafafa, #ebebeb 60%);
}

.arr-left {
  border-left: 0;
  border-right-color: #8d9cc6;
  margin-left: 5px;
}

.arr-right {
  border-right: 0;
  border-left-color: #8d9cc6;
  margin-right: 5px;
}

.corner {
  width: 17px;
}

/* detail */
.detail {
  padding-top: 1px;
  padding-right: 3px;
  background: linear-gradient(#e3eeff, #e3eeff) 0 0 / 100% 30px no-repeat;
}

.tabs.sub {
  padding-left: 3px;
}

.panels {
  display: flex;
  gap: 6px;
  padding: 2px;
  border: 1px solid #8fa6cf;
  background: #f3f7ff;
  box-shadow: 1px 2px 1px #cfdcf0;
}

.panel {
  display: grid;
  grid-auto-rows: 21px;
  row-gap: 6px;
  align-items: center;
  min-height: 199px;
  padding: 11px 8px 11px 7px;
  border: 1px solid #6992cf;
  background: #e3eeff;
}

.p1 { grid-template-columns: 70px 200px; }
.p2 { grid-template-columns: 79px 200px; }
.p3 { grid-template-columns: 48px 121px; }
.p4 { grid-template-columns: 76px 121px; }

.solo {
  padding-left: 1px;
}
```
